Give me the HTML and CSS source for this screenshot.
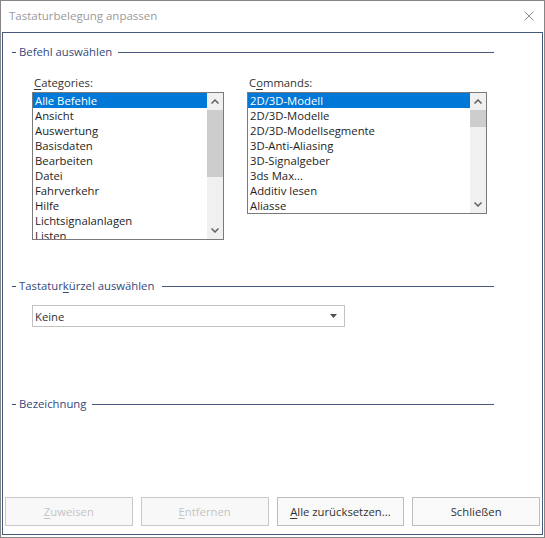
FILE: index.html
```html
<!DOCTYPE html>
<html>
<head>
<meta charset="utf-8">
<link rel="stylesheet" href="styles.css">
</head>
<body>
<div class="window">
  <div class="titlebar">
    <span class="title">Tastaturbelegung anpassen</span>
    <svg class="close" width="10" height="10" viewBox="0 0 10 10"><path d="M0.5 0.5 L9.5 9.5 M9.5 0.5 L0.5 9.5" stroke="#8a8a8a" stroke-width="1" fill="none"/></svg>
  </div>
  <div class="panel">
    <div class="ghead g1"><span class="dash"></span><span class="gtext">Befehl auswählen</span><span class="gline"></span></div>
    <div class="lists">
      <div class="col">
        <div class="label"><u>C</u>ategories:</div>
        <div class="listbox cat">
          <div class="items">
            <div class="item sel">Alle Befehle</div>
            <div class="item">Ansicht</div>
            <div class="item">Auswertung</div>
            <div class="item">Basisdaten</div>
            <div class="item">Bearbeiten</div>
            <div class="item">Datei</div>
            <div class="item">Fahrverkehr</div>
            <div class="item">Hilfe</div>
            <div class="item">Lichtsignalanlagen</div>
            <div class="item">Listen</div>
          </div>
          <div class="sb">
            <div class="sbbtn"><svg width="8" height="5" viewBox="0 0 8 5"><polyline points="0.5,4.5 4,1 7.5,4.5" fill="none" stroke="#606060" stroke-width="1.5"/></svg></div>
            <div class="track"><div class="thumb thumb-cat"></div></div>
            <div class="sbbtn"><svg width="8" height="5" viewBox="0 0 8 5"><polyline points="0.5,0.5 4,4 7.5,0.5" fill="none" stroke="#606060" stroke-width="1.5"/></svg></div>
          </div>
        </div>
      </div>
      <div class="col">
        <div class="label">C<u>o</u>mmands:</div>
        <div class="listbox cmd">
          <div class="items">
            <div class="item sel">2D/3D-Modell</div>
            <div class="item">2D/3D-Modelle</div>
            <div class="item">2D/3D-Modellsegmente</div>
            <div class="item">3D-Anti-Aliasing</div>
            <div class="item">3D-Signalgeber</div>
            <div class="item">3ds Max...</div>
            <div class="item">Additiv lesen</div>
            <div class="item">Aliasse</div>
          </div>
          <div class="sb">
            <div class="sbbtn"><svg width="8" height="5" viewBox="0 0 8 5"><polyline points="0.5,4.5 4,1 7.5,4.5" fill="none" stroke="#606060" stroke-width="1.5"/></svg></div>
            <div class="track"><div class="thumb thumb-cmd"></div></div>
            <div class="sbbtn"><svg width="8" height="5" viewBox="0 0 8 5"><polyline points="0.5,0.5 4,4 7.5,0.5" fill="none" stroke="#606060" stroke-width="1.5"/></svg></div>
          </div>
        </div>
      </div>
    </div>
    <div class="ghead g2"><span class="dash"></span><span class="gtext">Tastatur<u>k</u>ürzel auswählen</span><span class="gline"></span></div>
    <div class="combo"><span>Keine</span><svg width="7" height="4" viewBox="0 0 7 4"><polygon points="0,0 7,0 3.5,4" fill="#505050"/></svg></div>
    <div class="ghead g3"><span class="dash"></span><span class="gtext">Bezeichnung</span><span class="gline"></span></div>
    <div class="buttons">
      <div class="btn dis"><u>Z</u>uweisen</div>
      <div class="btn dis"><u>E</u>ntfernen</div>
      <div class="btn"><u>A</u>lle zurücksetzen...</div>
      <div class="btn">Schließen</div>
    </div>
  </div>
</div>
</body>
</html>
```

FILE: styles.css
```css
html, body {
  margin: 0;
  padding: 0;
  background: #ffffff;
}
body {
  font-family: "Open Sans", "Noto Sans", sans-serif;
  font-size: 11.3px;
  color: #222;
}
.window {
  width: 545px;
  height: 538px;
  box-sizing: border-box;
  border: 1px solid #868686;
  display: flex;
  flex-direction: column;
  background: #fff;
}
.titlebar {
  height: 31px;
  display: flex;
  align-items: center;
  justify-content: space-between;
  padding: 0 10px 2px 8px;
  box-sizing: border-box;
}
.title {
  color: #9a9a9a;
  font-size: 11.5px;
  margin-bottom: 1px;
}
.close {
  margin-top: 1px;
}
.panel {
  flex: 1;
  margin: 0 1px 2px 1px;
  border: 1px solid #45597b;
  display: flex;
  flex-direction: column;
  padding-top: 11px;
}
.ghead {
  display: flex;
  align-items: center;
  height: 16px;
  margin-left: 9px;
  margin-right: 48px;
}
.dash {
  width: 4px;
  height: 1px;
  background: #3b4d75;
  margin-right: 3px;
}
.gtext {
  color: #34487a;
  white-space: nowrap;
  margin-bottom: 2px;
}
.gline {
  flex: 1;
  height: 1px;
  background: #45597b;
  margin-left: 6px;
}
.g2 .gline { margin-left: 8px; }
.lists {
  display: grid;
  grid-template-columns: 192px 240px;
  column-gap: 23px;
  margin: 15px 0 0 29px;
}
.label {
  line-height: 15px;
  padding-left: 2px;
  margin-bottom: 2px;
  color: #333;
}
.listbox {
  border: 1px solid #7a7a7a;
  box-sizing: border-box;
  display: flex;
  overflow: hidden;
}
.listbox.cat { height: 148px; }
.listbox.cmd { height: 122px; }
.items {
  flex: 1;
  overflow: hidden;
}
.item {
  height: 15px;
  line-height: 15px;
  padding-left: 2px;
  white-space: nowrap;
  color: #1e1e1e;
}
.item.sel {
  background: #0078d7;
  color: #fff;
}
.sb {
  width: 16px;
  background: #f0f0f0;
  display: flex;
  flex-direction: column;
}
.sbbtn {
  height: 17px;
  display: flex;
  align-items: center;
  justify-content: center;
}
.track {
  flex: 1;
}
.thumb {
  background: #cdcdcd;
}
.thumb-cat { height: 67px; }
.thumb-cmd { height: 17px; }
.g2 { margin-top: 38px; }
.combo {
  margin: 11px 0 0 29px;
  width: 313px;
  height: 22px;
  box-sizing: border-box;
  border: 1px solid #c2c2c2;
  display: flex;
  align-items: center;
  justify-content: space-between;
  padding: 0 7px 0 2px;
  color: #333;
}
.g3 { margin-top: 69px; }
.buttons {
  margin-top: auto;
  margin-bottom: 8px;
  padding: 0 2px;
  display: grid;
  grid-template-columns: repeat(4, 1fr);
  column-gap: 8px;
}
.btn {
  height: 29px;
  box-sizing: border-box;
  border: 1px solid #bdbdbd;
  background: #f9f9f9;
  display: flex;
  align-items: center;
  justify-content: center;
  color: #333;
}
.btn.dis {
  color: #c4c4c4;
  border-color: #c9c9c9;
  background: #f8f8f8;
}
u {
  text-decoration: underline;
  text-underline-offset: 2px;
}
```
